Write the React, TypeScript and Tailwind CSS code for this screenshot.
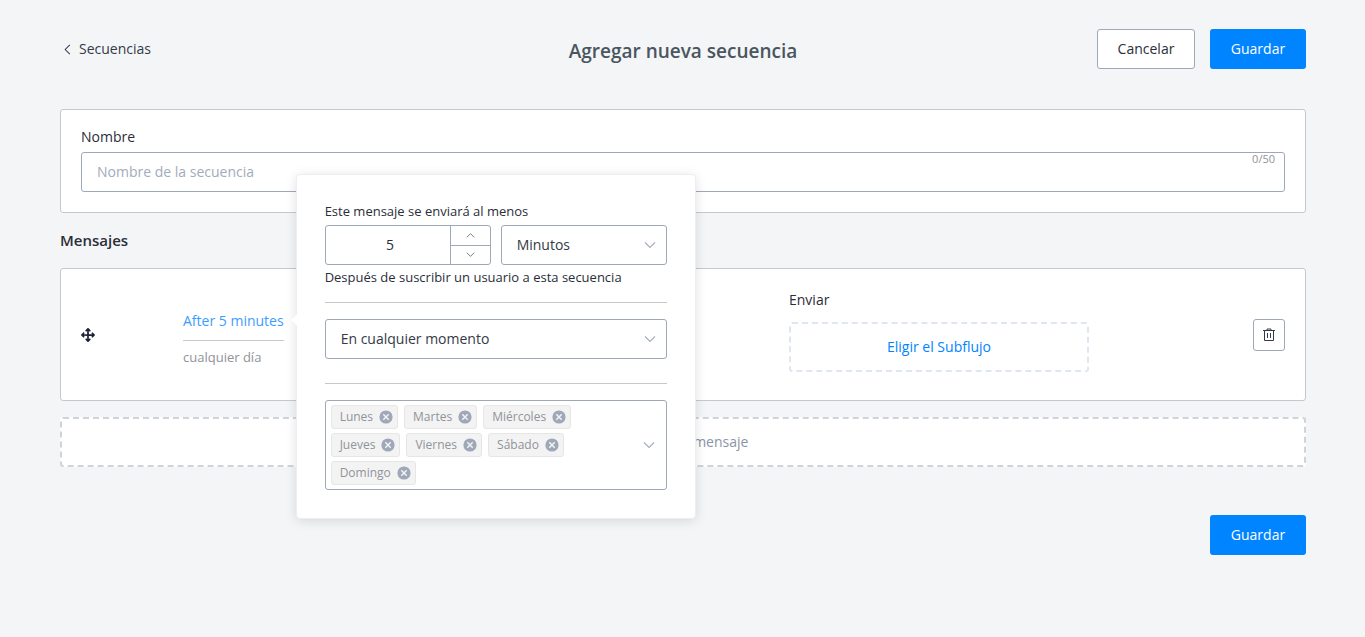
import { useState } from "react";
import { FaArrowsUpDownLeftRight } from "react-icons/fa6";

const DAYS = ["Lunes", "Martes", "Miércoles", "Jueves", "Viernes", "Sábado", "Domingo"];

type Direction = "up" | "down" | "left";

const CHEVRONS: Record<Direction, string> = {
  up: "M1 8.5 6 3.5l5 5",
  down: "M1 3.5l5 5 5-5",
  left: "M8.5 1 3.5 6l5 5",
};

function Chevron({ direction, className }: { direction: Direction; className: string }) {
  return (
    <svg viewBox="0 0 12 12" fill="none" stroke="currentColor" strokeWidth="1.1" className={className} aria-hidden="true">
      <path d={CHEVRONS[direction]} />
    </svg>
  );
}

function TrashIcon() {
  return (
    <svg viewBox="0 0 14 14" width="14" height="14" fill="none" stroke="currentColor" aria-hidden="true">
      <path d="M1 2.5h12M5 2V1h4v1M2.5 2.5v10h9v-10M5.5 5v5M8.5 5v5" />
    </svg>
  );
}

function PrimaryButton({ children }: { children: string }) {
  return (
    <button type="button" className="h-10 w-24 rounded-[3px] bg-[#0084ff] text-sm text-white">
      {children}
    </button>
  );
}

function SelectBox({ label, options }: { label: string; options: string[] }) {
  return (
    <div className="relative min-w-0">
      <select
        aria-label={label}
        className="h-10 w-full appearance-none rounded-[3px] border border-[#9fa8b8] bg-white pr-8 pl-[15px] text-sm text-[#343a46]"
      >
        {options.map((option) => (
          <option key={option}>{option}</option>
        ))}
      </select>
      <Chevron direction="down" className="pointer-events-none absolute top-[14px] right-[11px] size-3 text-[#a5adba]" />
    </div>
  );
}

function DayTag({ day, onRemove }: { day: string; onRemove: () => void }) {
  return (
    <li className="flex h-6 items-center gap-[6px] rounded-[3px] border border-[#e6e6e6] bg-[#f3f3f3] pr-1 pl-2 text-xs text-[#909399]">
      {day}
      <button type="button" aria-label={`Quitar ${day}`} onClick={onRemove}>
        <svg viewBox="0 0 14 14" width="14" height="14" aria-hidden="true">
          <circle cx="7" cy="7" r="6.6" fill="#9fa8b8" />
          <path d="M4.3 4.3l5.4 5.4M9.7 4.3 4.3 9.7" stroke="#f3f3f3" strokeWidth="1.5" />
        </svg>
      </button>
    </li>
  );
}

function SchedulePopover({ delay, onDelayChange }: { delay: number; onDelayChange: (delay: number) => void }) {
  const [days, setDays] = useState(DAYS);
  return (
    <div
      role="dialog"
      aria-label="Programación del mensaje"
      className="absolute top-[-137px] left-full z-10 ml-3 w-[400px] rounded border border-[#ebeef5] bg-white px-7 pt-[26px] pb-7 text-[#2a2e38] shadow-[0_2px_12px_rgba(0,0,0,0.12)]"
    >
      <span className="absolute top-[141px] left-[-4px] size-2 rotate-45 bg-white" />
      <label htmlFor="delay" className="block text-[13px] leading-5">
        Este mensaje se enviará al menos
      </label>
      <div className="mt-1 grid grid-cols-2 gap-[10px]">
        <div className="flex h-10 min-w-0 overflow-hidden rounded-[3px] border border-[#9fa8b8]">
          <input
            id="delay"
            type="number"
            value={delay}
            onChange={(event) => onDelayChange(Number(event.target.value))}
            className="min-w-0 flex-1 appearance-none pl-[5px] text-center text-sm [-moz-appearance:textfield] [&::-webkit-inner-spin-button]:appearance-none"
          />
          <div className="flex w-10 flex-col border-l border-[#9fa8b8] text-[#606266]">
            <button
              type="button"
              aria-label="Aumentar"
              onClick={() => onDelayChange(delay + 1)}
              className="flex h-5 items-center justify-center border-b border-[#9fa8b8]"
            >
              <Chevron direction="up" className="size-[9px]" />
            </button>
            <button
              type="button"
              aria-label="Disminuir"
              onClick={() => onDelayChange(Math.max(1, delay - 1))}
              className="flex flex-1 items-center justify-center"
            >
              <Chevron direction="down" className="size-[9px]" />
            </button>
          </div>
        </div>
        <SelectBox label="Unidad de tiempo" options={["Minutos", "Horas", "Días"]} />
      </div>
      <p className="mt-[2px] text-[13px] leading-5">Después de suscribir un usuario a esta secuencia</p>
      <hr className="mt-[15px] mb-4 border-[#c5c8cd]" />
      <SelectBox label="Momento de envío" options={["En cualquier momento", "En un horario"]} />
      <hr className="mt-6 mb-4 border-[#c5c8cd]" />
      <div className="flex items-center rounded-[3px] border border-[#9fa8b8] py-1 pr-[11px] pl-[5px]">
        <ul aria-label="Días de envío" className="flex flex-1 flex-wrap gap-x-[6px] gap-y-1">
          {days.map((day) => (
            <DayTag key={day} day={day} onRemove={() => setDays(days.filter((other) => other !== day))} />
          ))}
        </ul>
        <Chevron direction="down" className="ml-3 size-3 shrink-0 text-[#a5adba]" />
      </div>
    </div>
  );
}

export default function App() {
  const [delay, setDelay] = useState(5);
  const [name, setName] = useState("");
  return (
    <main className="min-h-screen bg-[#f3f5f7] pt-[29px] pr-[59px] pb-20 pl-[60px] font-['Open_Sans',sans-serif] text-sm leading-5 text-[#2a2e38]">
      <header className="mb-10 grid grid-cols-[1fr_auto_1fr] items-center">
        <a href="#secuencias" className="flex items-center gap-[6px] pl-[2px] text-[#343a46]">
          <Chevron direction="left" className="size-[11px]" />
          Secuencias
        </a>
        <h1 className="pt-1 text-[19px] font-semibold text-[#4a5560]">Agregar nueva secuencia</h1>
        <div className="flex justify-end gap-[15px]">
          <button type="button" className="h-10 w-[98px] rounded-[3px] border border-[#9fa8b8] bg-white text-sm">
            Cancelar
          </button>
          <PrimaryButton>Guardar</PrimaryButton>
        </div>
      </header>

      <section className="rounded-[3px] border border-[#c5c8cd] bg-white px-5 pt-[17px] pb-5">
        <label htmlFor="name" className="mb-[5px] block">
          Nombre
        </label>
        <div className="relative">
          <input
            id="name"
            value={name}
            maxLength={50}
            onChange={(event) => setName(event.target.value)}
            placeholder="Nombre de la secuencia"
            className="block h-10 w-full rounded-[3px] border border-[#9fa8b8] bg-white px-[15px] pb-[2px] placeholder:text-[#a3abba]"
          />
          <span className="absolute top-0 right-[10px] text-[11px] leading-[14px] text-[#909399]">{name.length}/50</span>
        </div>
      </section>

      <h2 className="mt-[15px] mb-4 text-[15px] leading-6 font-semibold">Mensajes</h2>

      <section className="grid grid-cols-[102px_606fr_464fr_32px] items-center rounded-[3px] border border-[#c5c8cd] bg-white p-5">
        <FaArrowsUpDownLeftRight className="size-[14px] cursor-move text-[#1c2333]" />
        <div className="relative mt-2 w-fit">
          <button type="button" className="block h-[30px] border-b border-[#c5c8cd] pb-[9px] text-[#3d9dff]">
            After {delay} minutes
          </button>
          <p className="mt-[6px] text-[13px] leading-5 text-[#909399]">cualquier día</p>
          <SchedulePopover delay={delay} onDelayChange={setDelay} />
        </div>
        <div className="pt-px pb-2">
          <p className="mb-3">Enviar</p>
          <button
            type="button"
            className="block h-[50px] w-[300px] rounded-[3px] border-2 border-dashed border-[#dfe6ef] text-[#0084ff]"
          >
            Eligir el Subflujo
          </button>
        </div>
        <button
          type="button"
          aria-label="Eliminar mensaje"
          className="flex size-8 items-center justify-center rounded-[3px] border border-[#9fa8b8] text-[#343a46]"
        >
          <TrashIcon />
        </button>
      </section>

      <button
        type="button"
        className="mt-4 block h-[50px] w-full rounded-[3px] border-2 border-dashed border-[#cfd4db] bg-white text-[#8a94a6]"
      >
        Agregar un mensaje
      </button>

      <footer className="mt-12 flex justify-end">
        <PrimaryButton>Guardar</PrimaryButton>
      </footer>
    </main>
  );
}
